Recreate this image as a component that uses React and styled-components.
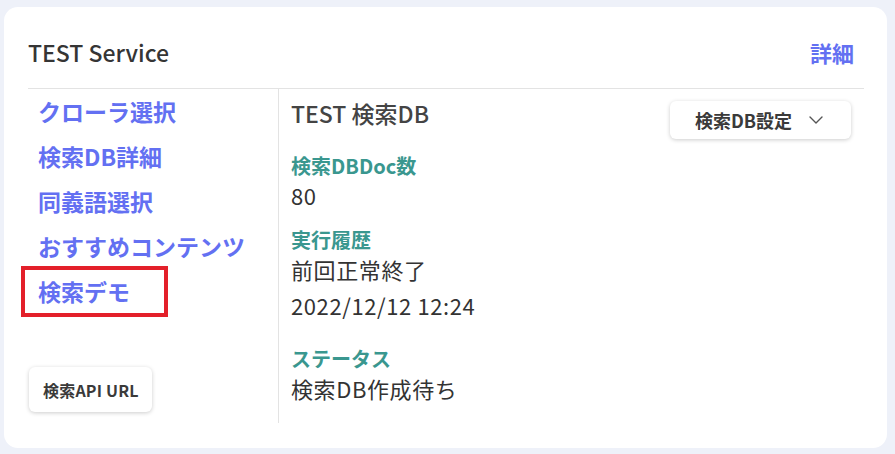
import React from 'react'
import styled, { createGlobalStyle } from 'styled-components'

const GlobalStyle = createGlobalStyle`
  html, body {
    margin: 0;
    padding: 0;
    background: #eef1f9;
    font-family: "Noto Sans CJK JP", "Noto Sans", sans-serif;
  }
`

const links = ['クローラ選択', '検索DB詳細', '同義語選択', 'おすすめコンテンツ', '検索デモ']

function App() {
  return (
    <>
      <GlobalStyle />
      <Page>
        <Card>
          <Header>
            <Title>TEST Service</Title>
            <DetailLink>詳細</DetailLink>
          </Header>
          <Body>
            <Side>
              <NavList>
                {links.map((l) => (
                  <NavItem key={l} selected={l === '検索デモ'}>{l}</NavItem>
                ))}
              </NavList>
              <SmallButton>検索API URL</SmallButton>
            </Side>
            <Main>
              <MainHead>
                <DbName>TEST 検索DB</DbName>
                <DropButton>
                  検索DB設定
                  <svg width="14" height="8" viewBox="0 0 14 8" fill="none" stroke="#555" strokeWidth="1.4" strokeLinecap="round" strokeLinejoin="round">
                    <path d="M1 1l6 6 6-6" />
                  </svg>
                </DropButton>
              </MainHead>
              <Field>
                <Label>検索DBDoc数</Label>
                <Value>80</Value>
              </Field>
              <Field>
                <Label>実行履歴</Label>
                <Value>前回正常終了</Value>
                <Value spaced>2022/12/12 12:24</Value>
              </Field>
              <Field gap={9}>
                <Label>ステータス</Label>
                <Value>検索DB作成待ち</Value>
              </Field>
            </Main>
          </Body>
        </Card>
      </Page>
    </>
  )
}

export default App

const Page = styled.div`
  padding: 7px 8px 6px 4px;
`

const Card = styled.div`
  background: #ffffff;
  border-radius: 14px;
  height: 441px;
  box-sizing: border-box;
  padding: 30px 23px 0 24px;
`

const Header = styled.div`
  display: flex;
  justify-content: space-between;
  align-items: center;
  padding: 0 10px 21px 0;
  border-bottom: 1px solid #e3e3e3;
`

const Title = styled.div`
  font-size: 23px;
  font-weight: 500;
  line-height: 30px;
  color: #353535;
`

const DetailLink = styled.div`
  font-size: 22px;
  font-weight: 700;
  line-height: 30px;
  color: #6370f2;
`

const Body = styled.div`
  display: flex;
  height: 334px;
`

const Side = styled.div`
  width: 251px;
  border-right: 1px solid #e3e3e3;
  display: flex;
  flex-direction: column;
  justify-content: space-between;
  padding-bottom: 11px;
  box-sizing: border-box;
`

const NavList = styled.div`
  display: flex;
  flex-direction: column;
  align-items: flex-start;
`

const NavItem = styled.div`
  font-size: 23px;
  font-weight: 700;
  color: #6370f2;
  line-height: 43px;
  margin: -3px 0 -3px -7px;
  padding: 0 34px 0 13px;
  border: 4px solid ${(p) => (p.selected ? '#e3202a' : 'transparent')};
  white-space: nowrap;
`

const SmallButton = styled.button`
  align-self: flex-start;
  margin-left: 1px;
  font-family: inherit;
  font-size: 16px;
  font-weight: 700;
  letter-spacing: 0.2px;
  color: #3a3a3a;
  background: #fff;
  border: none;
  border-radius: 6px;
  height: 45px;
  padding: 0 13px 0 14px;
  box-shadow: 0 1px 4px rgba(0, 0, 0, 0.2);
`

const Main = styled.div`
  flex: 1;
  padding: 9px 13px 0 12px;
  display: flex;
  flex-direction: column;
`

const MainHead = styled.div`
  display: flex;
  justify-content: space-between;
  align-items: flex-start;
  margin-bottom: 13px;
`

const DbName = styled.div`
  font-size: 23px;
  font-weight: 500;
  color: #444;
  line-height: 30px;
`

const DropButton = styled.button`
  display: flex;
  align-items: center;
  gap: 17px;
  margin-top: 3px;
  font-family: inherit;
  font-size: 18px;
  font-weight: 700;
  color: #3a3a3a;
  background: #fff;
  border: none;
  border-radius: 6px;
  height: 38px;
  width: 181px;
  padding: 0 0 0 25px;
  box-shadow: 0 1px 4px rgba(0, 0, 0, 0.2);
`

const Field = styled.div`
  display: flex;
  flex-direction: column;
  margin-top: ${(p) => (p.gap ? p.gap + 'px' : '0')};
  margin-bottom: 16px;
`

const Label = styled.div`
  font-size: 20px;
  font-weight: 700;
  color: #3a978f;
  line-height: 28px;
`

const Value = styled.div`
  font-size: 22px;
  letter-spacing: 0.6px;
  color: #333;
  line-height: 30px;
  margin-top: ${(p) => (p.spaced ? '6px' : '0')};
`
